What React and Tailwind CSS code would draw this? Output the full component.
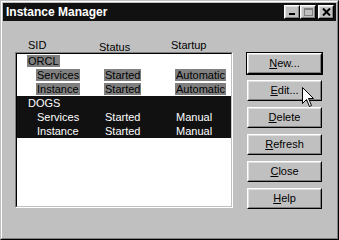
import React from 'react';

const font = { fontFamily: '"Liberation Sans", Arial, sans-serif' };

const rows = [
  { name: 'ORCL', indent: false, status: '', startup: '', mode: 'hl' },
  { name: 'Services', indent: true, status: 'Started', startup: 'Automatic', mode: 'hl' },
  { name: 'Instance', indent: true, status: 'Started', startup: 'Automatic', mode: 'hl' },
  { name: 'DOGS', indent: false, status: '', startup: '', mode: 'sel' },
  { name: 'Services', indent: true, status: 'Started', startup: 'Manual', mode: 'sel' },
  { name: 'Instance', indent: true, status: 'Started', startup: 'Manual', mode: 'sel' },
];

const buttons = ['New...', 'Edit...', 'Delete', 'Refresh', 'Close', 'Help'];

const Cell = ({ text, hl, className = '' }) => {
  if (!text) return <span className={className} />;
  return (
    <span className={className}>
      <span className={hl ? 'bg-[#808080] text-black px-px -mx-px' : ''}>{text}</span>
    </span>
  );
};

const Button = ({ label, isDefault }) => (
  <div className={isDefault ? 'border border-black' : 'border border-transparent'}>
    <div className="border border-t-white border-l-white border-r-black border-b-black">
      <div className="h-[19px] flex items-center justify-center text-[11px] text-black border border-t-[#dfdfdf] border-l-[#dfdfdf] border-r-[#808080] border-b-[#808080]">
        <u>{label[0]}</u>
        {label.slice(1)}
      </div>
    </div>
  </div>
);

const TitleButton = ({ children }) => (
  <div className="w-[16px] h-[14px] bg-[#c0c0c0] border border-t-white border-l-white border-r-black border-b-black">
    <div className="w-full h-full border border-t-[#dfdfdf] border-l-[#dfdfdf] border-r-[#808080] border-b-[#808080] relative">
      {children}
    </div>
  </div>
);

export default function App() {
  return (
    <div
      style={font}
      className="relative w-[339px] h-[240px] bg-[#c0c0c0] border border-t-[#c0c0c0] border-l-[#c0c0c0] border-r-black border-b-black"
    >
      <div className="w-full h-full border border-t-white border-l-white border-r-[#808080] border-b-[#808080] p-px flex flex-col">
        {/* title bar */}
        <div className="h-[18px] bg-[#111111] flex items-center pl-[3px] pr-[2px]">
          <span className="text-white font-bold text-[12px] leading-none">Instance Manager</span>
          <div className="ml-auto flex items-center">
            <TitleButton>
              <div className="absolute left-[3px] bottom-[2px] w-[6px] h-[2px] bg-black" />
            </TitleButton>
            <TitleButton>
              <div className="absolute left-[2px] top-[1px] w-[9px] h-[8px] border border-[#808080] border-t-2" />
            </TitleButton>
            <div className="w-[2px]" />
            <TitleButton>
              <svg className="absolute left-[2px] top-[1px]" width="9" height="8" viewBox="0 0 9 8">
                <path d="M1 0.5 L8 7.5 M8 0.5 L1 7.5" stroke="black" strokeWidth="2" />
              </svg>
            </TitleButton>
          </div>
        </div>

        {/* body */}
        <div className="flex flex-1">
          <div className="ml-[12px] mt-[17px] w-[218px] flex flex-col">
            <div className="h-[14px] flex text-[11px] leading-[14px] text-black">
              <span className="ml-[13px] w-[71px]">SID</span>
              <span className="w-[72px] mt-[2px]">Status</span>
              <span>Startup</span>
            </div>
            <div className="h-[156px] border border-t-[#808080] border-l-[#808080] border-r-white border-b-white">
              <div className="w-full h-full bg-white border border-t-black border-l-black border-r-[#c0c0c0] border-b-[#c0c0c0]">
                {rows.map((r, i) => {
                  const hl = r.mode === 'hl';
                  return (
                    <div
                      key={i}
                      className={`h-[14px] flex text-[11px] leading-[14px] ${hl ? 'text-black' : 'bg-[#111111] text-white'}`}
                    >
                      <Cell
                        text={r.name}
                        hl={hl}
                        className={r.indent ? 'pl-[20px] w-[88px]' : 'pl-[11px] w-[88px]'}
                      />
                      <Cell text={r.status} hl={hl} className="w-[71px]" />
                      <Cell text={r.startup} hl={hl} />
                    </div>
                  );
                })}
              </div>
            </div>
          </div>

          <div className="ml-[13px] mt-[31px] w-[77px] flex flex-col gap-[4px]">
            {buttons.map((b, i) => (
              <Button key={b} label={b} isDefault={i === 0} />
            ))}
          </div>
        </div>
      </div>

      {/* mouse pointer */}
      <svg className="absolute left-[301px] top-[86px]" width="13" height="21" viewBox="0 0 13 21">
        <path
          d="M0.5 0.5 L0.5 16.5 L4.5 12.5 L7.5 19.5 L9.5 18.5 L6.5 11.5 L11.5 11.5 Z"
          fill="white"
          stroke="black"
          strokeWidth="1"
        />
      </svg>
    </div>
  );
}
